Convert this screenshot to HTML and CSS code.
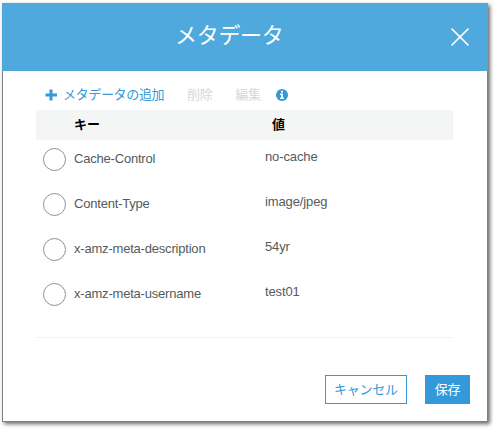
FILE: index.html
```html
<!DOCTYPE html>
<html lang="ja">
<head>
<meta charset="utf-8">
<title>メタデータ</title>
<link rel="stylesheet" href="styles.css">
</head>
<body>
<section class="dialog">
  <header class="header">
    <h1 class="title">メタデータ</h1>
    <svg class="close" width="18" height="18" viewBox="0 0 18 18"><path d="M.6.6 17.4 17.4M17.4.6.6 17.4"/></svg>
  </header>
  <div class="content">
    <nav class="toolbar">
      <svg class="plus" width="12" height="12" viewBox="0 0 12 12"><path d="M4.5.5h3v4H12v3H7.5v4h-3v-4H.5v-3h4z"/></svg>
      <a class="add">メタデータの追加</a>
      <span class="off">削除</span>
      <span class="off edit">編集</span>
      <svg class="info" width="12" height="12" viewBox="0 0 12 12"><circle cx="6" cy="6" r="6"/><path d="M5 1.8h2v1.7H5zM4 4.5h3v4h1V10H4V8.500h1V6H4z"/></svg>
    </nav>
    <div class="thead"><span class="key">キー</span><span class="val">値</span></div>
    <div class="rows">
      <div class="row"><i class="radio"></i><span class="key">Cache-Control</span><span class="val">no-cache</span></div>
      <div class="row"><i class="radio"></i><span class="key">Content-Type</span><span class="val">image/jpeg</span></div>
      <div class="row"><i class="radio"></i><span class="key">x-amz-meta-description</span><span class="val">54yr</span></div>
      <div class="row"><i class="radio"></i><span class="key">x-amz-meta-username</span><span class="val">test01</span></div>
    </div>
  </div>
  <footer class="footer">
    <button class="btn cancel">キャンセル</button>
    <button class="btn save">保存</button>
  </footer>
</section>
</body>
</html>
```
FILE: styles.css
```css
* { box-sizing: border-box; }
body {
  margin: 0;
  height: 431px;
  padding: 3px 0 0 2px;
  background: #fff;
  font: 13px/18px "Liberation Sans", "Noto Sans CJK JP", sans-serif;
  color: #545b5c;
}
.dialog {
  width: 486px;
  height: 419px;
  border: 1px solid #7f7f7f;
  border-top: 0;
  background: #fff;
  box-shadow: 2px 2px 4px rgba(0, 0, 0, .6);
}
.header {
  display: flex;
  align-items: center;
  height: 68px;
  margin: 0 -1px;
  padding: 0 19px 0 173px;
  background: #4fa9dd;
}
.title {
  margin: 0 0 8px;
  font-family: "Noto Sans CJK JP", sans-serif;
  font-size: 22px;
  line-height: 30px;
  font-weight: 400;
  letter-spacing: -.3px;
  color: #fff;
}
.close {
  margin-left: auto;
  fill: none;
  stroke: #fff;
  stroke-width: 1.5;
}
.content {
  width: 417px;
  height: 267px;
  margin-left: 33px;
  border-bottom: 1px solid #f1f2f2;
}
.toolbar {
  display: flex;
  align-items: center;
  height: 39px;
  padding: 8px 0 0 9px;
  font-family: "Noto Sans CJK JP", sans-serif;
}
.plus, .info { fill: #3399d9; }
.info path { fill: #fff; }
.add, .off { margin-bottom: 2px; letter-spacing: -.35px; }
.add {
  width: 124px;
  margin-left: 6px;
  color: #3399d9;
}
.off { color: #d5d8d8; }
.edit { margin-left: 23px; }
.info { margin: 0 0 0 15px; }
.thead {
  display: flex;
  align-items: center;
  height: 30px;
  padding: 0 0 3px 38px;
  background: #f4f6f6;
  color: #000;
  font-weight: 700;
  font-family: "Noto Sans CJK JP", sans-serif;
}
.thead .key { width: 198px; }
.row {
  display: flex;
  align-items: center;
  height: 45px;
  padding-left: 7px;
}
.rows { margin-top: -3px; }
.radio {
  width: 23px;
  height: 23px;
  margin-right: 8px;
  border: 1px solid #879596;
  border-radius: 50%;
}
.row .key { width: 191px; margin-bottom: 2px; letter-spacing: -.2px; }
.row .val { margin-bottom: 6px; letter-spacing: -.12px; }
.footer {
  display: flex;
  justify-content: flex-end;
  gap: 18px;
  padding: 37px 17px 0 0;
}
.btn {
  height: 29px;
  padding: 0 0 2px;
  border: 1px solid #3399d9;
  border-radius: 0;
  font: 400 13px/18px "Noto Sans CJK JP", sans-serif;
  letter-spacing: -.25px;
}
.cancel { width: 82px; background: #fff; color: #3399d9; }
.save { width: 45px; background: #3399d9; color: #fff; }
```
